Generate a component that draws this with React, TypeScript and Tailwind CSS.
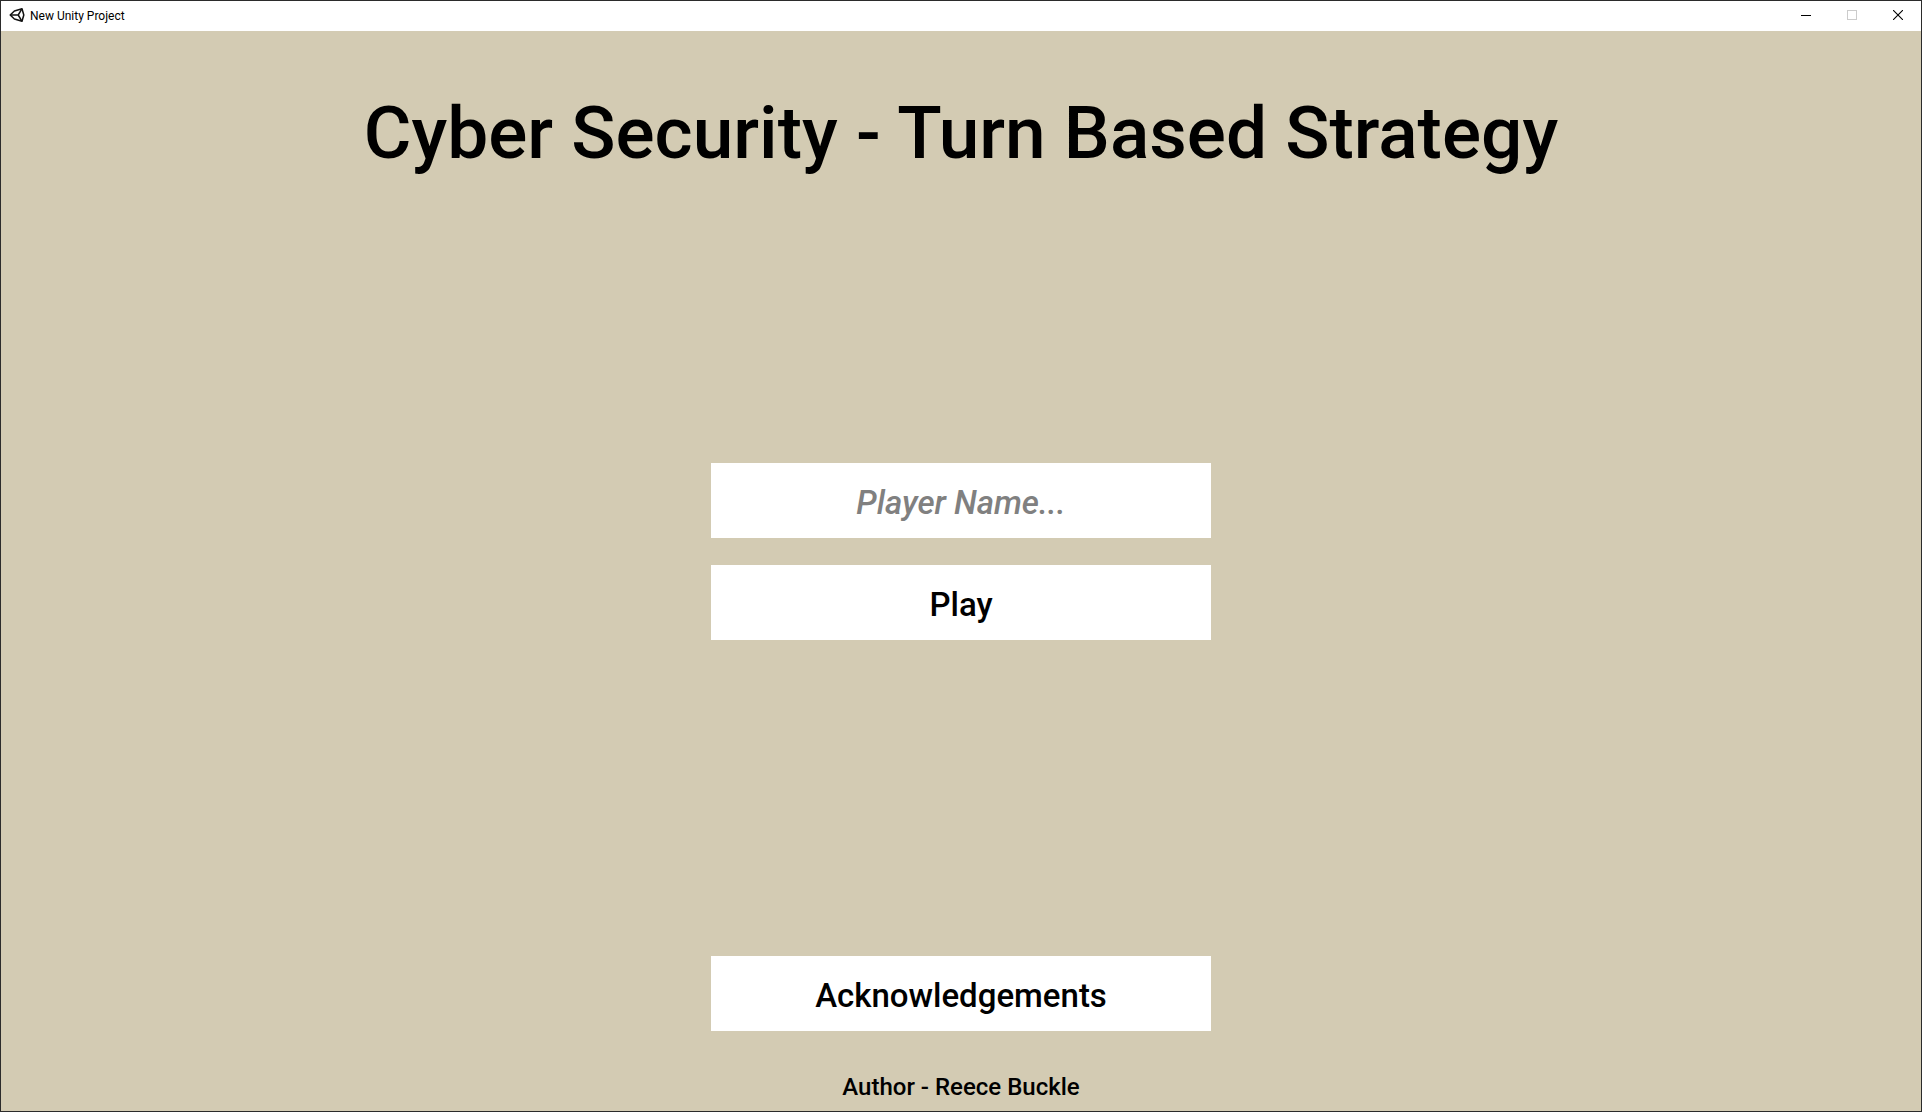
import React from "react";

function UnityLogo() {
  return (
    <svg viewBox="0 0 16 16" className="size-4 shrink-0" fill="none" stroke="#111" strokeWidth="1.5" aria-hidden="true">
      <path d="M1.2 8 L5.4 4 L13 1.8 L14.8 8 L13 14.2 L5.4 12 Z" strokeLinejoin="round" />
      <path d="M2 8 H9.2 M9.2 8 L12.6 2.4 M9.2 8 L12.6 13.6" />
    </svg>
  );
}

const caption = "flex h-full w-[46px] items-center justify-center";

function TitleBar() {
  return (
    <header className="flex h-[30px] items-center bg-white pb-0.5 pl-2">
      <UnityLogo />
      <span className="ml-[5px] flex-1 pt-0.5 font-[Roboto,sans-serif] text-[12px] leading-4 text-black">
        New Unity Project
      </span>
      <button type="button" aria-label="Minimize" className={caption}>
        <svg viewBox="0 0 10 10" className="size-[10px]" shapeRendering="crispEdges" aria-hidden="true">
          <path d="M0 5h10v1H0z" fill="#000" />
        </svg>
      </button>
      <button type="button" aria-label="Maximize" disabled className={caption}>
        <svg viewBox="0 0 10 10" className="size-[10px]" fill="none" stroke="#ccc" aria-hidden="true">
          <rect x="0.5" y="0.5" width="9" height="9" />
        </svg>
      </button>
      <button type="button" aria-label="Close" className={caption}>
        <svg viewBox="0 0 10 10" className="size-[10px]" fill="none" stroke="#000" strokeWidth="1.1" aria-hidden="true">
          <path d="M0 0 10 10M10 0 0 10" />
        </svg>
      </button>
    </header>
  );
}

const box = "h-[75px] w-[500px] max-w-full bg-white pt-1 text-center text-[33px] font-medium";

export default function App() {
  return (
    <div className="flex min-h-screen flex-col border border-[#2b2b2b] bg-[#d3cbb3] font-[Roboto,sans-serif] text-black">
      <TitleBar />
      <main className="flex flex-1 flex-col items-center px-4 pt-[58px] pb-2">
        <h1 className="text-center text-[73px] leading-[88px] font-medium">Cyber Security - Turn Based Strategy</h1>
        <form className="mt-[286px] flex flex-col items-center gap-[27px]" onSubmit={(e) => e.preventDefault()}>
          <input
            type="text"
            aria-label="Player Name"
            placeholder="Player Name..."
            className={`${box} outline-none placeholder:italic placeholder:text-[#808080]`}
          />
          <button type="submit" className={box}>Play</button>
        </form>
        <button type="button" className={`${box} mt-auto`}>Acknowledgements</button>
        <footer className="mt-10 text-[24px] leading-8 font-medium">Author - Reece Buckle</footer>
      </main>
    </div>
  );
}
